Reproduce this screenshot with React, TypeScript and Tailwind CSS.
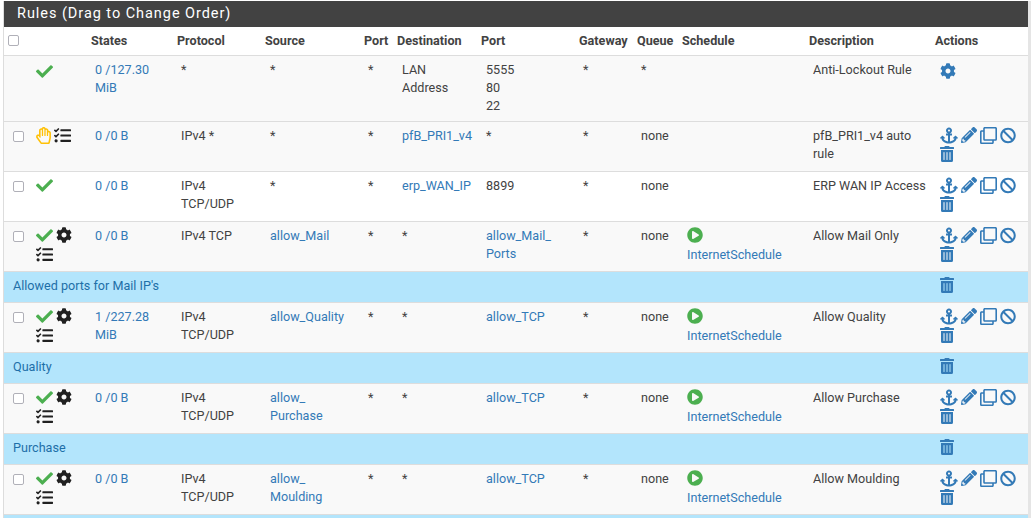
import {
  FaAnchor,
  FaBan,
  FaCheck,
  FaCog,
  FaPencilAlt,
  FaPlayCircle,
  FaRegClone,
  FaRegHandPaper,
  FaTasks,
  FaTrashAlt,
} from "react-icons/fa";

type Rule = {
  h: string;
  box?: boolean;
  white?: boolean;
  status: "pass" | "block";
  cog?: boolean;
  tasks?: boolean;
  states: string;
  proto: string;
  source: string;
  srcLink?: boolean;
  port: string;
  dest: string;
  destLink?: boolean;
  dport: string;
  dportLink?: boolean;
  gateway: string;
  queue: string;
  sched?: boolean;
  desc: string;
  lockout?: boolean;
};

type Row = Rule | { note: string };

const rows: Row[] = [
  { h: "h-[66px]", status: "pass", states: "0 /127.30\nMiB", proto: "*", source: "*", port: "*", dest: "LAN\nAddress", dport: "5555\n80\n22", gateway: "*", queue: "*", desc: "Anti-Lockout Rule", lockout: true },
  { h: "h-[50px]", box: true, status: "block", tasks: true, states: "0 /0 B", proto: "IPv4 *", source: "*", port: "*", dest: "pfB_PRI1_v4", destLink: true, dport: "*", gateway: "*", queue: "none", desc: "pfB_PRI1_v4 auto\nrule" },
  { h: "h-[50px]", box: true, white: true, status: "pass", states: "0 /0 B", proto: "IPv4\nTCP/UDP", source: "*", port: "*", dest: "erp_WAN_IP", destLink: true, dport: "8899", gateway: "*", queue: "none", desc: "ERP WAN IP Access" },
  { h: "h-[50px]", box: true, status: "pass", cog: true, tasks: true, states: "0 /0 B", proto: "IPv4 TCP", source: "allow_Mail", srcLink: true, port: "*", dest: "*", dport: "allow_Mail_\nPorts", dportLink: true, gateway: "*", queue: "none", sched: true, desc: "Allow Mail Only" },
  { note: "Allowed ports for Mail IP's" },
  { h: "h-[50px]", box: true, status: "pass", cog: true, tasks: true, states: "1 /227.28\nMiB", proto: "IPv4\nTCP/UDP", source: "allow_Quality", srcLink: true, port: "*", dest: "*", dport: "allow_TCP", dportLink: true, gateway: "*", queue: "none", sched: true, desc: "Allow Quality" },
  { note: "Quality" },
  { h: "h-[50px]", box: true, status: "pass", cog: true, tasks: true, states: "0 /0 B", proto: "IPv4\nTCP/UDP", source: "allow_\nPurchase", srcLink: true, port: "*", dest: "*", dport: "allow_TCP", dportLink: true, gateway: "*", queue: "none", sched: true, desc: "Allow Purchase" },
  { note: "Purchase" },
  { h: "h-[50px]", box: true, status: "pass", cog: true, tasks: true, states: "0 /0 B", proto: "IPv4\nTCP/UDP", source: "allow_\nMoulding", srcLink: true, port: "*", dest: "*", dport: "allow_TCP", dportLink: true, gateway: "*", queue: "none", sched: true, desc: "Allow Moulding" },
];

const heads = ["", "", "States", "Protocol", "Source", "Port", "Destination", "Port", "Gateway", "Queue", "Schedule", "Description", "Actions"];
const widths = [28, 55, 86, 88, 99, 33, 84, 98, 58, 45, 127, 126, 97];

const tdClass = "pl-2 pt-[5px] align-top whitespace-pre";
const tdShift = "pl-[9px] pt-[5px] align-top whitespace-pre";
const link = "text-[#337ab7]";

function CheckBox({ header }: { header?: boolean }) {
  return (
    <span className={`block h-[11px] w-[11px] rounded-[2px] border-[1.5px] border-[#b0b0b8] bg-white ${header ? "" : "ml-[9px] mt-[4px]"}`} />
  );
}

function Actions() {
  return (
    <div className="flex w-[86px] flex-wrap items-center gap-x-[3px] gap-y-[2px] text-[#337ab7]">
      <FaAnchor className="h-[17px] w-[18px]" />
      <FaPencilAlt className="h-[16px] w-[16px]" />
      <FaRegClone className="h-[17px] w-[17px]" />
      <FaBan className="h-[17px] w-[16px]" />
      <FaTrashAlt className="ml-[-0.5px] h-[16px] w-[14px]" />
    </div>
  );
}

function RuleRow({ r }: { r: Rule }) {
  return (
    <tr className={`border-b border-[#ddd] text-[#424242] ${r.white ? "bg-white" : "bg-[#f9f9f9]"} ${r.h}`}>
      <td className="align-top pt-[5px]">{r.box && <CheckBox />}</td>
      <td className="align-top pl-1 pt-[5px]">
        <div className={`flex w-[48px] flex-wrap items-center gap-x-[3px] gap-y-[2px] text-[#212121] ${r.lockout ? "mt-[2px]" : ""}`}>
          {r.status === "pass" ? (
            <FaCheck className="h-[17px] w-[17px] text-[#4caf50]" />
          ) : (
            <FaRegHandPaper className="h-[17px] w-[15px] text-[#ffc107]" />
          )}
          {r.cog && <FaCog className="h-[16px] w-[16px]" />}
          {r.tasks && <FaTasks className="h-[17px] w-[17px]" />}
        </div>
      </td>
      <td className={`${tdClass} ${link}`}>{r.states}</td>
      <td className={tdClass}>{r.proto}</td>
      <td className={`${tdShift} ${r.srcLink ? link : ""}`}>{r.source}</td>
      <td className={tdClass}>{r.port}</td>
      <td className={`${tdShift} ${r.destLink ? link : ""}`}>{r.dest}</td>
      <td className={`${tdShift} ${r.dportLink ? link : ""}`}>{r.dport}</td>
      <td className={tdClass}>{r.gateway}</td>
      <td className={tdClass}>{r.queue}</td>
      <td className={`${tdClass} ${link}`}>
        {r.sched && (
          <>
            <FaPlayCircle className="mb-[3px] ml-px h-[16px] w-[16px] text-[#4caf50]" />
            <span className="ml-px">InternetSchedule</span>
          </>
        )}
      </td>
      <td className={tdClass}>{r.desc}</td>
      <td className="align-top pl-[9px] pt-[5px]">
        {r.lockout ? <FaCog className="mt-[2px] h-[16px] w-[16px] text-[#337ab7]" /> : <Actions />}
      </td>
    </tr>
  );
}

export default function App() {
  return (
    <div className="h-[518px] overflow-hidden bg-white pl-[3px] pt-px font-['Roboto',sans-serif] text-[12.6px] leading-[18px]">
      <div className="h-[517px] border-l border-r-[3px] border-l-[#ddd] border-r-[#e5e5e5] bg-white">
        <h2 className="h-[26px] bg-[#424242] pl-[13px] text-[14.5px] leading-[26px] tracking-[0.95px] text-white">Rules (Drag to Change Order)</h2>
        <table className="w-full table-fixed border-collapse">
          <colgroup>
            {widths.map((w, i) => (
              <col key={i} style={{ width: w }} />
            ))}
          </colgroup>
          <thead>
            <tr className="h-[28px] border-b border-[#ddd] bg-white">
              {heads.map((t, i) => (
                <th key={i} className="pl-1 text-left font-bold text-[#424242]">
                  {i === 0 ? <CheckBox header /> : t}
                </th>
              ))}
            </tr>
          </thead>
          <tbody>
            {rows.map((r, i) =>
              "note" in r ? (
                <tr key={i} className="h-[31px] border-b border-[#ddd] bg-[#b3e5fc] text-[#1e6fa8]">
                  <td colSpan={12} className="pl-[9px] pb-px">{r.note}</td>
                  <td className="pl-[9px] pt-[5px] align-top">
                    <FaTrashAlt className="ml-[-0.5px] h-[16px] w-[14px] text-[#337ab7]" />
                  </td>
                </tr>
              ) : (
                <RuleRow key={i} r={r} />
              ),
            )}
            <tr className="h-[10px] bg-[#b3e5fc]">
              <td colSpan={13} />
            </tr>
          </tbody>
        </table>
      </div>
    </div>
  );
}
